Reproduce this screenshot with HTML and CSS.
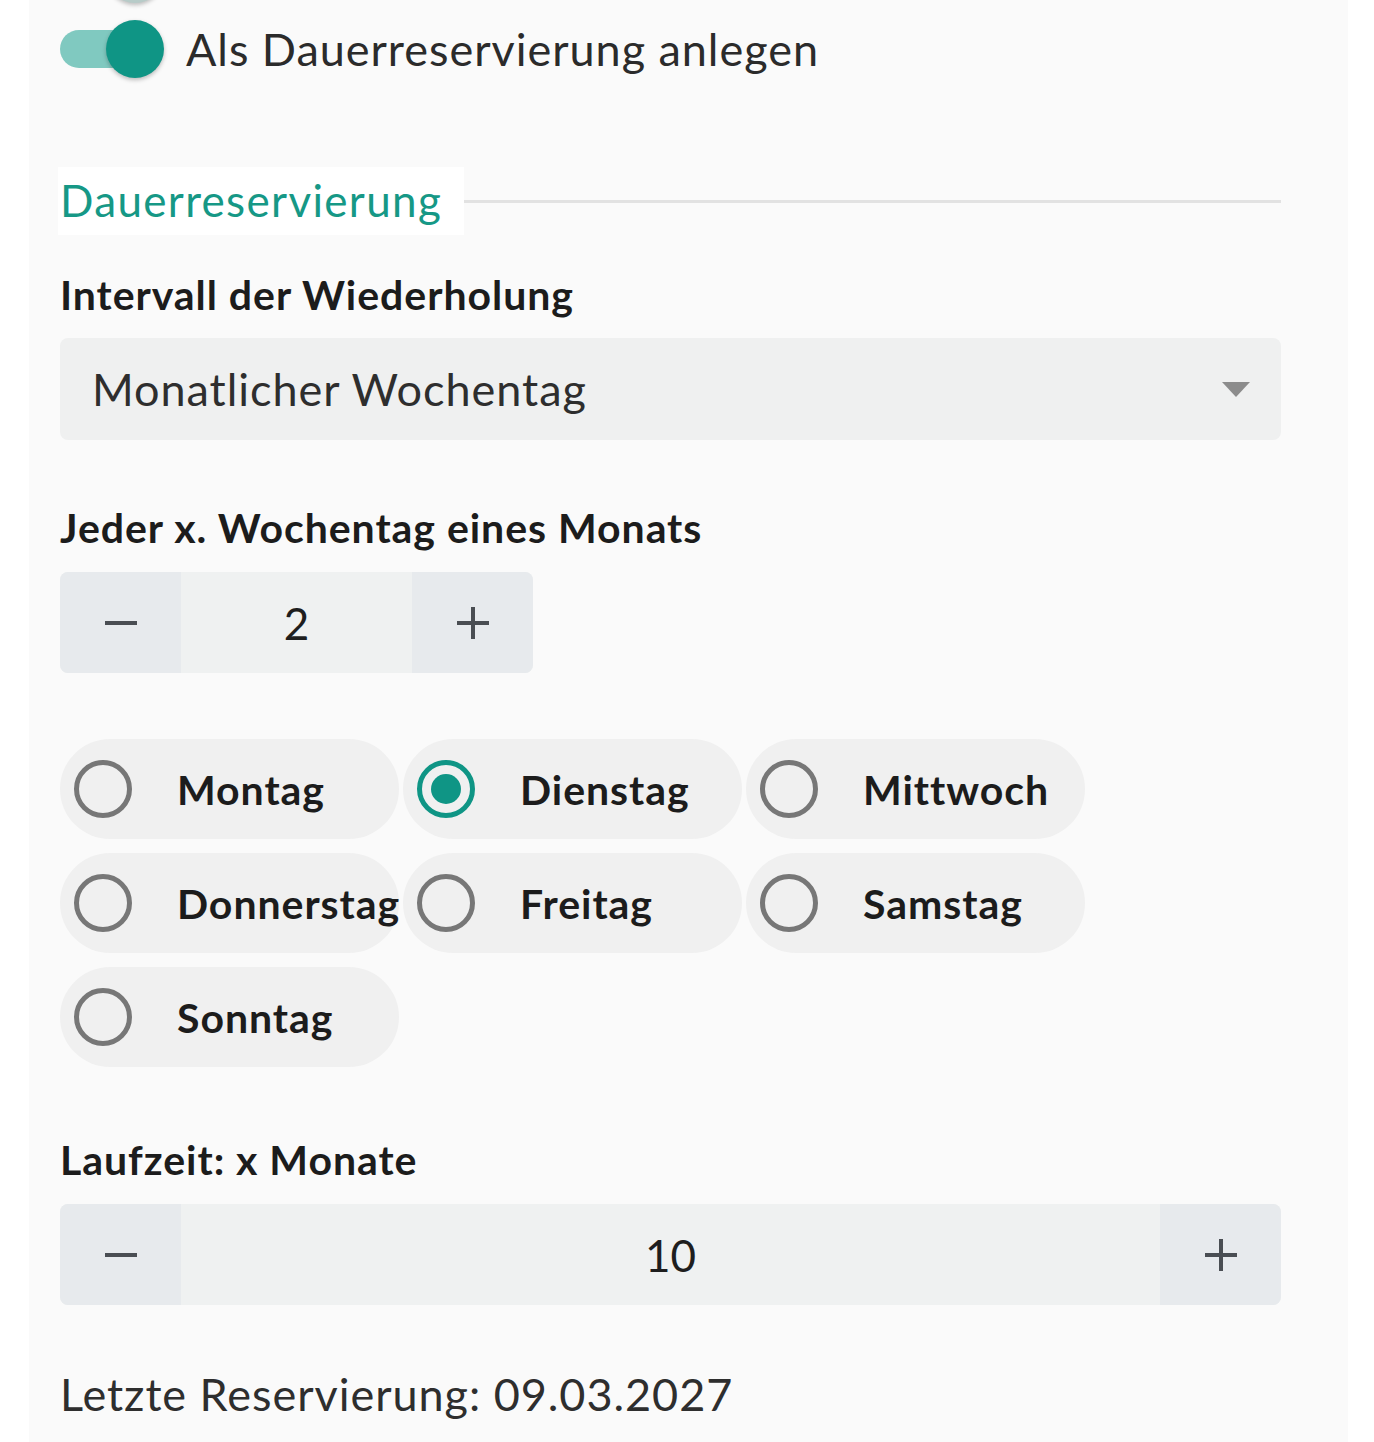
FILE: index.html
```html
<!DOCTYPE html>
<html>
<head>
    <title>Dauerreservierung</title>
    <link rel="stylesheet" href="styles.css">
</head>
<body>
    <div class="card">
        <!-- previous toggle row, scrolled mostly out of view -->
        <div class="switch-row prev-row">
            <span class="switch off"><span class="track"></span><span class="thumb"></span></span>
        </div>

        <label class="switch-row">
            <span class="switch on"><span class="track"></span><span class="thumb"></span></span>
            <span class="switch-label">Als Dauerreservierung anlegen</span>
        </label>

        <div class="section-head">
            <span class="section-title">Dauerreservierung</span>
            <span class="section-line"></span>
        </div>

        <div class="field-label first">Intervall der Wiederholung</div>
        <div class="select">
            <span>Monatlicher Wochentag</span>
            <svg class="select-arrow" width="28" height="15" viewBox="0 0 28 15"><polygon points="0,0 28,0 14,15" fill="#8c8c8c"/></svg>
        </div>

        <div class="field-label">Jeder x. Wochentag eines Monats</div>
        <div class="stepper small">
            <button class="step-btn minus">
                <svg width="34" height="34" viewBox="0 0 34 34"><line x1="1" y1="17" x2="33" y2="17" stroke="#4a4e53" stroke-width="4"/></svg>
            </button>
            <div class="step-value">2</div>
            <button class="step-btn plus">
                <svg width="34" height="34" viewBox="0 0 34 34"><line x1="1" y1="17" x2="33" y2="17" stroke="#4a4e53" stroke-width="4"/><line x1="17" y1="1" x2="17" y2="33" stroke="#4a4e53" stroke-width="4"/></svg>
            </button>
        </div>

        <div class="weekdays">
            <label class="day"><span class="radio"></span><span class="day-name">Montag</span></label>
            <label class="day"><span class="radio checked"></span><span class="day-name">Dienstag</span></label>
            <label class="day"><span class="radio"></span><span class="day-name">Mittwoch</span></label>
            <label class="day"><span class="radio"></span><span class="day-name">Donnerstag</span></label>
            <label class="day"><span class="radio"></span><span class="day-name">Freitag</span></label>
            <label class="day"><span class="radio"></span><span class="day-name">Samstag</span></label>
            <label class="day"><span class="radio"></span><span class="day-name">Sonntag</span></label>
        </div>

        <div class="field-label runtime">Laufzeit: x Monate</div>
        <div class="stepper">
            <button class="step-btn minus">
                <svg width="34" height="34" viewBox="0 0 34 34"><line x1="1" y1="17" x2="33" y2="17" stroke="#4a4e53" stroke-width="4"/></svg>
            </button>
            <div class="step-value">10</div>
            <button class="step-btn plus">
                <svg width="34" height="34" viewBox="0 0 34 34"><line x1="1" y1="17" x2="33" y2="17" stroke="#4a4e53" stroke-width="4"/><line x1="17" y1="1" x2="17" y2="33" stroke="#4a4e53" stroke-width="4"/></svg>
            </button>
        </div>

        <div class="last-date">Letzte Reservierung: 09.03.2027</div>
    </div>
</body>
</html>
```

FILE: styles.css
```css
body {
    margin: 0;
    background-color: #ffffff;
    font-family: Lato, "Open Sans", sans-serif;
    letter-spacing: 0.06em;
    color: #1c1c1c;
    overflow: hidden;
}
.card {
    margin-left: 29px;
    width: 1319px;
    min-height: 100vh;
    box-sizing: border-box;
    padding: 0 67px 0 31px;
    background-color: #fafafa;
    display: flex;
    flex-direction: column;
}

/* toggle switch */
.switch-row {
    display: flex;
    align-items: center;
    height: 58px;
    margin-top: 17px;
}
.prev-row {
    margin-top: -55px;
}
.switch {
    position: relative;
    width: 104px;
    height: 58px;
    flex-shrink: 0;
}
.track {
    position: absolute;
    left: 0;
    top: 10px;
    width: 90px;
    height: 38px;
    border-radius: 19px;
    background-color: #80c9c0;
}
.thumb {
    position: absolute;
    top: 0;
    left: 46px;
    width: 58px;
    height: 58px;
    border-radius: 50%;
    background-color: #0f9585;
    box-shadow: 0 2px 4px rgba(0, 0, 0, 0.25);
}
.switch.off .track {
    background-color: #d6dcdb;
}
.switch.off .thumb {
    left: 46px;
    background-color: #b7cbc8;
}
.switch-label {
    margin-left: 22px;
    font-size: 45px;
    color: #2b2b2b;
}

/* section header */
.section-head {
    display: flex;
    align-items: center;
    height: 68px;
    margin-top: 89px;
    margin-left: -2px;
}
.section-title {
    height: 68px;
    line-height: 66px;
    padding: 0 22px 0 2px;
    background-color: #ffffff;
    color: #169886;
    font-size: 44px;
    letter-spacing: 0.03em;
}
.section-line {
    flex: 1;
    height: 3px;
    background-color: #e2e2e2;
}

.field-label {
    margin-top: 60px;
    line-height: 56px;
    font-size: 41px;
    font-weight: bold;
    color: #1c1c1c;
}
.field-label.first {
    margin-top: 32px;
}
.field-label.runtime {
    margin-top: 65px;
}

/* select */
.select {
    margin-top: 15px;
    height: 102px;
    border-radius: 8px;
    background-color: #eff0f0;
    display: flex;
    align-items: center;
    justify-content: space-between;
    padding: 0 31px 0 32px;
    font-size: 45px;
    color: #2e2e2e;
}

/* number stepper */
.stepper {
    margin-top: 16px;
    height: 101px;
    display: flex;
    border-radius: 8px;
    overflow: hidden;
    background-color: #eff1f1;
}
.stepper.small {
    width: 473px;
}
.step-btn {
    width: 121px;
    border: none;
    padding: 0;
    background-color: #e7eaed;
    display: flex;
    align-items: center;
    justify-content: center;
}
.step-value {
    flex: 1;
    display: flex;
    align-items: center;
    justify-content: center;
    font-size: 44px;
    letter-spacing: 0;
    color: #1e1e1e;
}

/* weekday radios */
.weekdays {
    margin-top: 66px;
    display: grid;
    grid-template-columns: repeat(3, 339px);
    column-gap: 4px;
    row-gap: 14px;
}
.day {
    height: 100px;
    border-radius: 50px;
    background-color: #f0f0f0;
    display: flex;
    align-items: center;
    padding-left: 14px;
    white-space: nowrap;
}
.radio {
    width: 58px;
    height: 58px;
    box-sizing: border-box;
    border: 5px solid #777777;
    border-radius: 50%;
    flex-shrink: 0;
    position: relative;
}
.radio.checked {
    border-color: #0f9585;
}
.radio.checked::after {
    content: "";
    position: absolute;
    left: 9px;
    top: 9px;
    width: 30px;
    height: 30px;
    border-radius: 50%;
    background-color: #0f9585;
}
.day-name {
    margin-left: 45px;
    font-size: 41px;
    font-weight: bold;
    color: #1c1c1c;
}

.last-date {
    margin-top: 61px;
    line-height: 56px;
    font-size: 45px;
    color: #2e2e2e;
}
```
